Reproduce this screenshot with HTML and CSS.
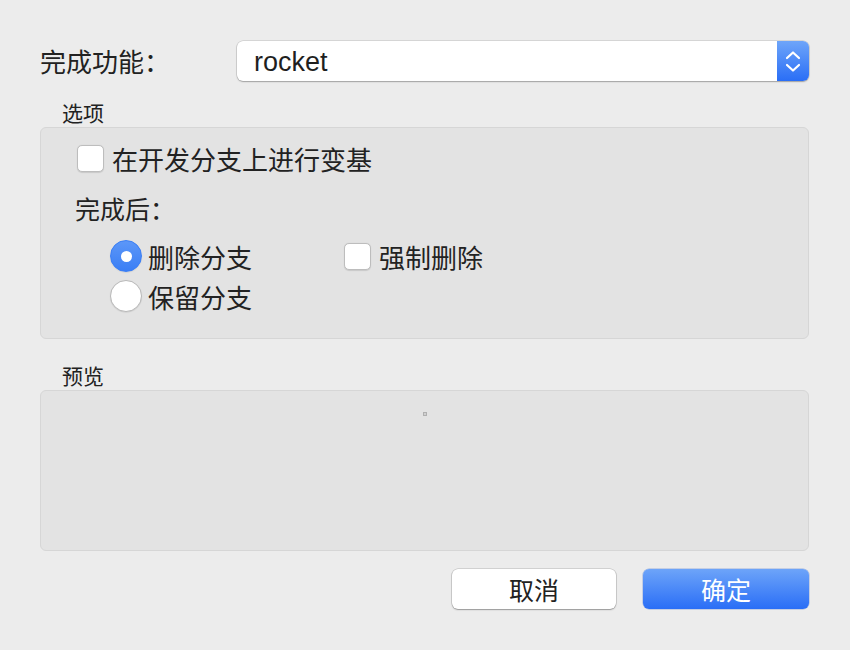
FILE: index.html
```html
<!DOCTYPE html>
<html lang="zh">
<head>
<meta charset="utf-8">
<link rel="stylesheet" href="styles.css">
</head>
<body>
<div class="dialog">
  <div class="top-row">
    <div class="top-label">完成功能：</div>
    <div class="select">
      <div class="select-value">rocket</div>
      <div class="select-btn">
        <svg width="32" height="40" viewBox="0 0 32 40">
          <path d="M10 17 L16 11.5 L22 17" fill="none" stroke="#fff" stroke-width="2.2" stroke-linecap="round" stroke-linejoin="round"/>
          <path d="M10 24 L16 29.5 L22 24" fill="none" stroke="#fff" stroke-width="2.2" stroke-linecap="round" stroke-linejoin="round"/>
        </svg>
      </div>
    </div>
  </div>

  <div class="section-title">选项</div>
  <div class="group options">
    <label class="check-row">
      <span class="checkbox"></span>
      <span>在开发分支上进行变基</span>
    </label>
    <div class="after-label">完成后：</div>
    <div class="choice-grid">
      <label class="choice">
        <span class="radio radio-on"><span class="radio-dot"></span></span>
        <span>删除分支</span>
      </label>
      <label class="choice">
        <span class="checkbox"></span>
        <span>强制删除</span>
      </label>
      <label class="choice">
        <span class="radio"></span>
        <span>保留分支</span>
      </label>
    </div>
  </div>

  <div class="section-title preview-title">预览</div>
  <div class="group preview">
    <span class="preview-dot"></span>
  </div>

  <div class="buttons">
    <button class="btn btn-cancel">取消</button>
    <button class="btn btn-ok">确定</button>
  </div>
</div>
</body>
</html>
```

FILE: styles.css
```css
html, body {
  margin: 0;
  padding: 0;
  background: #ececec;
}
body {
  width: 850px;
  height: 650px;
  overflow: hidden;
  font-family: "Noto Sans CJK SC", "Noto Sans", sans-serif;
  color: #222;
}
.dialog {
  padding: 41px 41px 0 40px;
}
.top-row {
  display: flex;
  align-items: center;
  height: 40px;
}
.top-label {
  width: 197px;
  font-size: 26px;
  line-height: 40px;
}
.select {
  flex: 1;
  display: flex;
  height: 40px;
  box-sizing: border-box;
  background: #fff;
  border-radius: 6px;
  box-shadow: 0 0 0 0.5px rgba(0,0,0,0.18), 0 1px 1.5px rgba(0,0,0,0.25);
  overflow: hidden;
}
.select-value {
  flex: 1;
  padding-left: 17px;
  font-family: "Liberation Sans", Arial, sans-serif;
  font-size: 27px;
  line-height: 42px;
  color: #1f1f1f;
}
.select-btn {
  width: 32px;
  height: 40px;
  background: linear-gradient(#6ea5f9, #2a6ef6);
}
.select-btn svg { display: block; }

.section-title {
  margin-left: 22px;
  font-size: 21px;
  line-height: 30px;
  height: 30px;
  margin-top: 16px;
  color: #222;
}
.preview-title { margin-top: 21px; }
.group {
  background: #e3e3e3;
  border: 1px solid #d6d6d6;
  border-radius: 6px;
}
.options {
  padding: 12px 0 0 36px;
  height: 198px;
}
.check-row {
  display: flex;
  align-items: center;
  height: 36px;
  font-size: 26px;
}
.checkbox {
  display: inline-block;
  width: 25px;
  height: 25px;
  background: #fff;
  border: 1px solid #bdbdbd;
  border-radius: 5px;
  box-shadow: 0 0.5px 1px rgba(0,0,0,0.12);
  margin-right: 8px;
  flex: none;
}
.after-label {
  margin-top: 14px;
  margin-left: -2px;
  height: 36px;
  line-height: 36px;
  font-size: 25px;
}
.choice-grid {
  margin-top: 10px;
  margin-left: 33px;
  display: grid;
  grid-template-columns: 234px auto;
  grid-auto-rows: 40px;
}
.choice {
  display: flex;
  align-items: center;
  font-size: 26px;
}
.radio {
  display: inline-flex;
  align-items: center;
  justify-content: center;
  width: 30px;
  height: 30px;
  border-radius: 50%;
  background: #fff;
  border: 1px solid #b9b9b9;
  box-shadow: 0 0.5px 1px rgba(0,0,0,0.12);
  margin-right: 6px;
  flex: none;
}
.radio-on {
  background: linear-gradient(#5c97f8, #3a7ef5);
  border-color: #3a7ef5;
}
.radio-dot {
  width: 11px;
  height: 11px;
  border-radius: 50%;
  background: #fff;
}
.preview {
  height: 159px;
  display: flex;
  justify-content: center;
  align-items: flex-start;
}
.preview-dot {
  margin-top: 21px;
  width: 4px;
  height: 4px;
  box-sizing: border-box;
  border: 1px solid #b0b0b0;
  background: #d0d0d0;
}

.buttons {
  margin-top: 18px;
  display: flex;
  justify-content: flex-end;
  gap: 27px;
}
.btn {
  font-family: "Noto Sans CJK SC", sans-serif;
  font-size: 25px;
  height: 40px;
  border-radius: 6px;
  padding: 0;
  border: none;
  cursor: default;
}
.btn-cancel {
  width: 164px;
  background: #fff;
  color: #222;
  box-shadow: 0 0 0 0.5px rgba(0,0,0,0.22), 0 1px 1.5px rgba(0,0,0,0.28);
}
.btn-ok {
  width: 166px;
  background: linear-gradient(#6da4f9, #2a6ef6);
  color: #fff;
  box-shadow: 0 0 0 0.5px rgba(40,90,200,0.4);
}
```
